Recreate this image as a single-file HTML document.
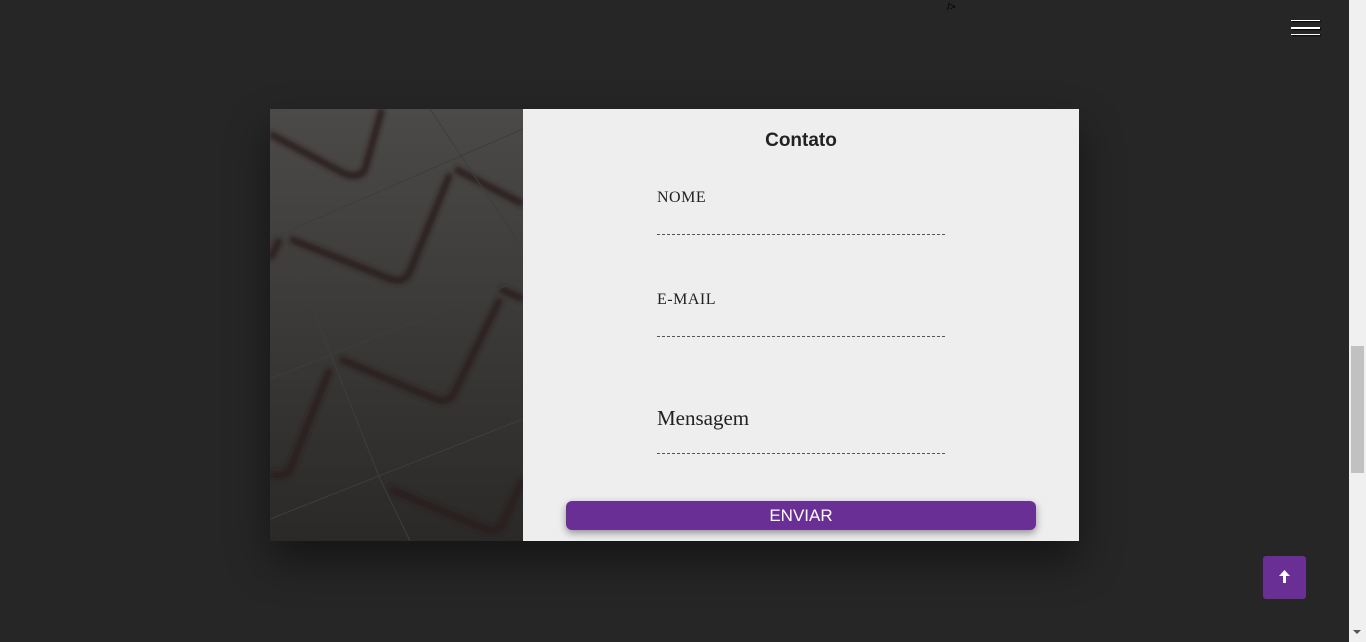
<!DOCTYPE html>
<html><head><meta charset="utf-8"><style>
body{margin:0;width:1366px;height:642px;background:#262626;overflow:hidden;position:relative;font-family:"Liberation Serif",serif}
.sb{position:absolute;left:1349px;top:0;width:17px;height:642px;background:#f0f0f0}
.th{position:absolute;left:1351px;top:346px;width:13px;height:127px;background:#c1c1c1}
.card{position:absolute;left:270px;top:109px;width:809px;height:432px;background:#eee;box-shadow:0 20px 40px rgba(0,0,0,.45)}
.img{position:absolute;left:0;top:0;width:253px;height:432px}
h2{position:absolute;left:253px;width:556px;top:21px;margin:0;text-align:center;font:bold 19px "Liberation Sans",sans-serif;color:#222}
.lbl{position:absolute;left:387px;font-size:16px;color:#222;letter-spacing:.5px}
.line{position:absolute;left:387px;width:288px;border-top:1px dashed #555}
.btn{position:absolute;left:296px;top:392px;width:470px;height:29px;background:#6a2f95;border-radius:6px;box-shadow:0 3px 8px rgba(0,0,0,.4);color:#fff;font:17px "Liberation Sans",sans-serif;text-align:center;line-height:30px}
.ham{position:absolute;left:1291px;width:29px;height:1px;background:#fff;box-shadow:1px 1px 1px #000}
.up{position:absolute;left:1263px;top:556px;width:43px;height:43px;background:#6a2f95;border-radius:3px}
</style></head><body>
<div style="position:absolute;left:947px;top:2px;color:#000;font-size:10px;font-family:'Liberation Sans'">/&gt;</div>
<div class="ham" style="top:20px"></div><div class="ham" style="top:27px;height:2px"></div><div class="ham" style="top:34px"></div>
<div class="card">
<svg class="img" viewBox="0 0 253 432">
<defs><linearGradient id="g" x1="0" y1="0" x2="0" y2="1"><stop offset="0" stop-color="#4c4a48"/><stop offset="1" stop-color="#2b2928"/></linearGradient>
<filter id="b"><feGaussianBlur stdDeviation="2.5"/></filter></defs>
<rect width="253" height="432" fill="url(#g)"/>
<g stroke="#2a1e1c" stroke-width="7" fill="none" filter="url(#b)" opacity=".9">
<path d="M0 25 L75 65 Q90 70 95 60 L112 0"/>
<path d="M20 130 L120 170 Q135 175 140 162 L180 65"/>
<path d="M70 250 L165 290 Q180 295 185 282 L230 190"/>
<path d="M185 60 L253 95"/>
<path d="M60 260 L20 360 Q15 370 0 365"/>
<path d="M120 380 L215 420 Q230 425 235 410 L253 370"/>
<path d="M230 180 L253 190"/>
<path d="M0 150 L10 130"/>
</g>
<g stroke="#3d3d40" stroke-width="1" fill="none">
<path d="M0 130 L253 20"/><path d="M0 270 L253 170"/><path d="M0 410 L253 310"/>
<path d="M160 0 L253 140"/><path d="M15 130 L110 370 L140 432"/>
</g>
</svg>
<h2>Contato</h2>
<div class="lbl" style="top:80px">NOME</div><div class="line" style="top:125px"></div>
<div class="lbl" style="top:182px">E-MAIL</div><div class="line" style="top:227px"></div>
<div class="lbl" style="top:297px;font-size:21px;letter-spacing:0">Mensagem</div><div class="line" style="top:344px"></div>
<div class="btn">ENVIAR</div>
</div>
<div class="up"><svg width="43" height="43" viewBox="0 0 43 43"><path d="M21.5 14 L27 20 L23 20 L23 27 L20 27 L20 20 L16 20 Z" fill="#fff"/></svg></div>
<div class="sb"></div><div class="th"></div>
<div style="position:absolute;left:1353px;top:630px;border:4px solid transparent;border-top:4px solid #555"></div>
</body></html>
